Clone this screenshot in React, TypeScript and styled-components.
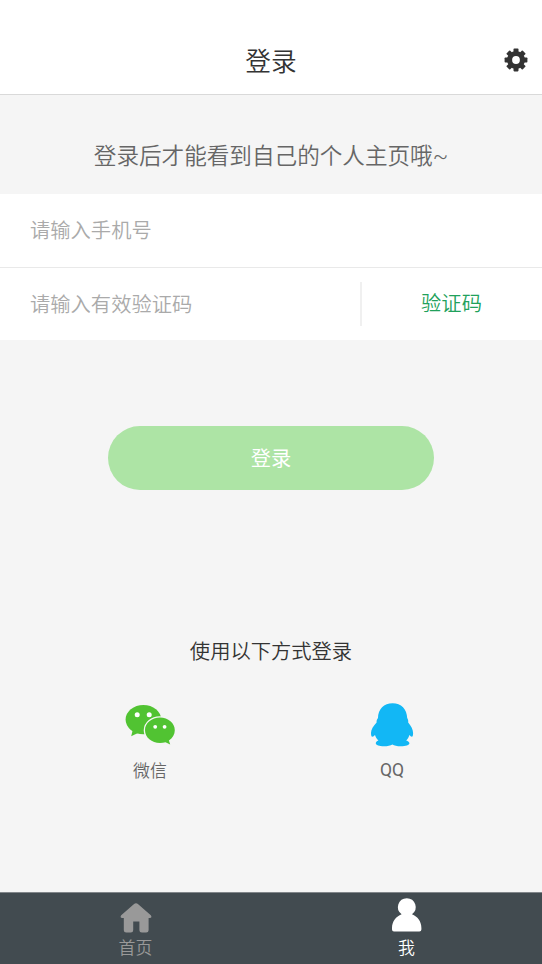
import React from "react";
import styled, { createGlobalStyle } from "styled-components";

const GlobalStyle = createGlobalStyle`
  * { box-sizing: border-box; }
  body { margin: 0; background: #f5f5f5; }
  button, input { font: inherit; border: 0; padding: 0; background: none; }
  svg { display: block; }
`;

const Screen = styled.div`
  width: 542px;
  height: 964px;
  display: flex;
  flex-direction: column;
  background: #f5f5f5;
  overflow: hidden;
  font-family: Roboto, "Noto Sans CJK SC", sans-serif;
  font-weight: 350;
`;

const Header = styled.header`
  height: 95px;
  padding: 26px 14px 0;
  display: grid;
  grid-template-columns: 24px 1fr 24px;
  align-items: center;
  background: #fff;
  border-bottom: 1px solid #d9d9d9;
`;

const Title = styled.h1`
  grid-column: 2;
  margin: 0;
  padding-top: 3px;
  text-align: center;
  font-size: 25.7px;
  font-weight: 350;
  line-height: 38px;
  color: #333;
`;

const IconButton = styled.button`
  width: 24px;
  height: 24px;
`;

const Notice = styled.p`
  margin: 0;
  height: 99px;
  padding-top: 45px;
  text-align: center;
  font-size: 22.6px;
  line-height: 34px;
  color: #666;
`;

const Form = styled.form`
  background: #fff;
`;

const Field = styled.div<{ $divided?: boolean }>`
  height: 73px;
  display: flex;
  align-items: center;
  border-top: ${(p) => (p.$divided ? "1px solid #e9e9e9" : "0")};
`;

const Input = styled.input`
  flex: 1;
  min-width: 0;
  height: 42px;
  padding: 1px 0 0 30px;
  font-size: 20.3px;
  outline: none;
  &::placeholder { color: #aaa; opacity: 1; }
`;

const CodeButton = styled.button`
  width: 182px;
  height: 44px;
  border-left: 2px solid #f0f0f0;
  padding: 0 1px 5px 0;
  font-size: 20.3px;
  color: #21a15b;
`;

const Submit = styled.button`
  width: 326px;
  height: 64px;
  margin: 86px auto 0;
  flex: none;
  border-radius: 32px;
  background: #ade4a5;
  color: #fff;
  font-size: 20.3px;
  font-weight: 400;
  padding-bottom: 3px;
`;

const AltTitle = styled.h2`
  margin: 147px 0 0;
  text-align: center;
  font-size: 20.3px;
  font-weight: 350;
  line-height: 30px;
  color: #333;
`;

const Providers = styled.div`
  display: grid;
  grid-template-columns: 242px 242px;
  justify-content: center;
  padding-top: 35px;
`;

const Provider = styled.div`
  display: flex;
  flex-direction: column;
  align-items: center;
  gap: 10px;
  font-size: 16.9px;
  line-height: 26px;
  color: #666;
`;

const LatinLabel = styled.span`
  font-size: 17.5px;
  font-weight: 400;
  line-height: 24px;
`;

const TabBar = styled.nav`
  margin-top: auto;
  height: 72px;
  display: grid;
  grid-template-columns: 1fr 1fr;
  background: #424b50;
  border-top: 1px solid #81868a;
`;

const Tab = styled.div<{ $active?: boolean }>`
  display: flex;
  flex-direction: column;
  align-items: center;
  padding-top: 4px;
  font-size: 16.9px;
  line-height: 26px;
  color: ${(p) => (p.$active ? "#fff" : "#999")};
  svg { margin-bottom: 1px; }
`;

const GearIcon = () => (
  <svg width="24" height="24" viewBox="-12 -12 24 24" fill="#333">
    {[0, 45, 90, 135].map((a) => (
      <rect key={a} x="-2.5" y="-11.4" width="5" height="22.8" rx="0.8" transform={`rotate(${a})`} />
    ))}
    <circle r="9" />
    <circle r="3.9" fill="#fff" />
  </svg>
);

const WechatIcon = () => (
  <svg width="52" height="46" viewBox="-1 0 52 46">
    <g fill="#51c332">
      <ellipse cx="18.4" cy="17.6" rx="17.8" ry="14.6" />
      <path d="M8 27 6.2 34.2 15 30Z" />
    </g>
    <g fill="#51c332" stroke="#f5f5f5" strokeWidth="2.6" paintOrder="stroke" strokeLinejoin="round">
      <path d="M35 15.6C26.7 15.6 20 21.2 20 28.3S26.7 41 35 41C37 41 38.8 40.7 40.5 40.2L45.2 42.4 43.9 38.5C47.6 36.1 49.8 32.4 49.8 28.3 49.8 21.2 43.2 15.6 35 15.6Z" />
    </g>
    <g fill="#fff">
      <circle cx="12.2" cy="12.8" r="2.5" />
      <circle cx="24.2" cy="12.8" r="2.5" />
      <circle cx="30.2" cy="24.8" r="1.9" />
      <circle cx="39.6" cy="24.8" r="1.9" />
    </g>
  </svg>
);

const QqIcon = () => (
  <svg width="44" height="46" viewBox="0 0 44 46" fill="#12b7f5">
    <path d="M22.6 1.2C14 1.2 8 7.2 8 16 7 17.2 6.4 18.6 6.6 20.4 3.2 24 1 27.5 1 31 1 33.2 1.4 34.7 2.3 34.7 3.3 34.7 4.3 33.8 5 33 5.6 35.2 6.8 37 8.4 38.4 6.6 39 5.8 40 5.8 41.2 5.8 43.2 9.4 44.2 13.8 44.2 17.6 44.2 20.6 43.6 22.4 42.4 24.2 43.6 27 44.2 30.8 44.2 35.8 44.2 39.4 43.2 39.4 41.2 39.4 40 38.2 39 36.2 38.4 37.8 37 38.8 35.2 39.4 33 40.2 33.8 41 34.7 41.9 34.7 42.7 34.7 43.1 33.2 43.1 31 43.1 27.5 41.2 24 38.2 20.4 38.4 18.6 38 17.2 37.2 16 37 7.2 31.2 1.2 22.6 1.2Z" />
  </svg>
);

const HomeIcon = () => (
  <svg width="34" height="37" viewBox="0 0 34 37" fill="#999">
    <path d="M14.8 7.2Q17 5.2 19.2 7.2L31.8 18.2Q33.4 20.6 30.8 21H29.6V33.2Q29.6 35.6 27.2 35.6H22.8Q20.4 35.6 20.4 33.2V24.6H14.2V33.2Q14.2 35.6 11.8 35.6H7.2Q4.8 35.6 4.8 33.2V21H3.2Q.6 20.6 2.2 18.2Z" />
  </svg>
);

const PersonIcon = () => (
  <svg width="32" height="37" viewBox="0 0 32 37" fill="#fff">
    <path d="M15.8 1.2A8.9 8.9 0 0 1 21 17.3C26.6 19.4 30.4 24.6 30.4 31V32.6Q30.4 34.6 28.4 34.6H3Q1 34.6 1 32.6V31C1 24.6 5 19.4 10.6 17.3A8.9 8.9 0 0 1 15.8 1.2Z" />
  </svg>
);

export default function App() {
  return (
    <>
      <GlobalStyle />
      <Screen>
        <Header>
          <Title>登录</Title>
          <IconButton aria-label="设置"><GearIcon /></IconButton>
        </Header>
        <Notice>登录后才能看到自己的个人主页哦~</Notice>
        <Form>
          <Field>
            <Input type="tel" placeholder="请输入手机号" />
          </Field>
          <Field $divided>
            <Input placeholder="请输入有效验证码" />
            <CodeButton type="button">验证码</CodeButton>
          </Field>
        </Form>
        <Submit type="button">登录</Submit>
        <AltTitle>使用以下方式登录</AltTitle>
        <Providers>
          <Provider><WechatIcon />微信</Provider>
          <Provider><QqIcon /><LatinLabel>QQ</LatinLabel></Provider>
        </Providers>
        <TabBar>
          <Tab><HomeIcon />首页</Tab>
          <Tab $active><PersonIcon />我</Tab>
        </TabBar>
      </Screen>
    </>
  );
}
